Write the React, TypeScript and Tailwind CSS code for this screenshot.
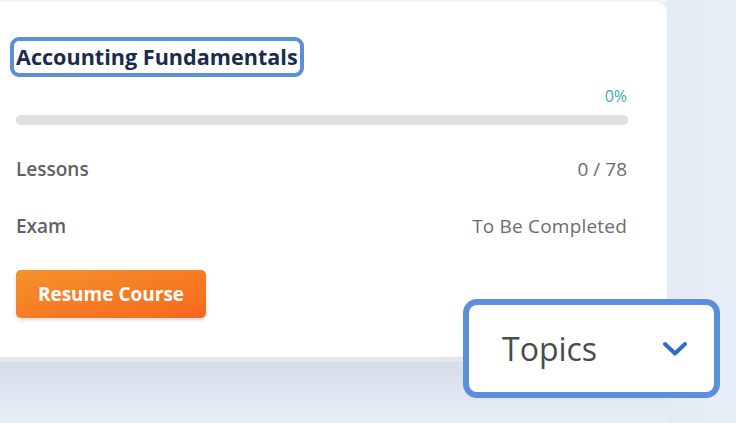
export default function App() {
  return (
    <div
      className="relative w-[736px] h-[423px] overflow-hidden bg-[#e8eef8] flex"
      style={{ fontFamily: '"Open Sans", "Liberation Sans", sans-serif' }}
    >
      <div className="w-[667px] flex flex-col">
        <div className="h-[2px] bg-[#f3f4f6]" />
        <div className="h-[355px] bg-white rounded-tr-[10px] pt-[35px] pr-[39px]">
          <div className="pl-[10px]">
            <h2 className="inline-block border-[4px] border-[#5b8fd9] rounded-[9px] px-[2px] text-[21.6px] leading-[32px] font-bold text-[#1b2b50]">
              Accounting Fundamentals
            </h2>
          </div>
          <div className="mt-[8px] text-right text-[16px] leading-[22px] text-[#3ba9b9] pr-px">0%</div>
          <div className="ml-[16px] mt-[8px] h-[10px] rounded-full bg-[#dfe0e2]" />
          <div className="ml-[16px] mt-[31px] flex justify-between text-[19px] leading-[26px]">
            <span className="font-semibold text-[#5f6166]">Lessons</span>
            <span className="text-[#6a6c70] pr-px">0 / 78</span>
          </div>
          <div className="ml-[16px] mt-[31px] flex justify-between text-[19px] leading-[26px]">
            <span className="font-semibold text-[#5f6166]">Exam</span>
            <span className="text-[#6a6c70] pr-px tracking-[0.2px]">To Be Completed</span>
          </div>
          <button className="ml-[16px] mt-[31px] w-[190px] h-[48px] rounded-[5px] bg-gradient-to-br from-[#f3922b] to-[#f8661e] text-white text-[19px] font-bold shadow-[0_2px_4px_rgba(0,0,0,0.15)]">
            Resume Course
          </button>
        </div>
        <div className="h-[5px] bg-[#e5e7ea]" />
        <div className="flex-1 bg-gradient-to-b from-[#d6dde8] to-[#e8eef8]" />
      </div>
      <div className="flex-1 bg-gradient-to-r from-[#e4eaf4] to-[#e9eff9]" />

      <div className="absolute left-[463px] top-[299px] w-[257px] h-[99px] border-[6px] border-[#5b8fd9] rounded-[14px] bg-white flex items-center justify-between pl-[33px] pr-[26px]">
        <span className="text-[32px] leading-[40px] text-[#4a4b4d]">Topics</span>
        <svg width="26" height="16" viewBox="0 0 26 16" fill="none">
          <path d="M3 3 L13 12.5 L23 3" stroke="#2d6bd0" strokeWidth="4" strokeLinecap="round" strokeLinejoin="round" />
        </svg>
      </div>
    </div>
  );
}
